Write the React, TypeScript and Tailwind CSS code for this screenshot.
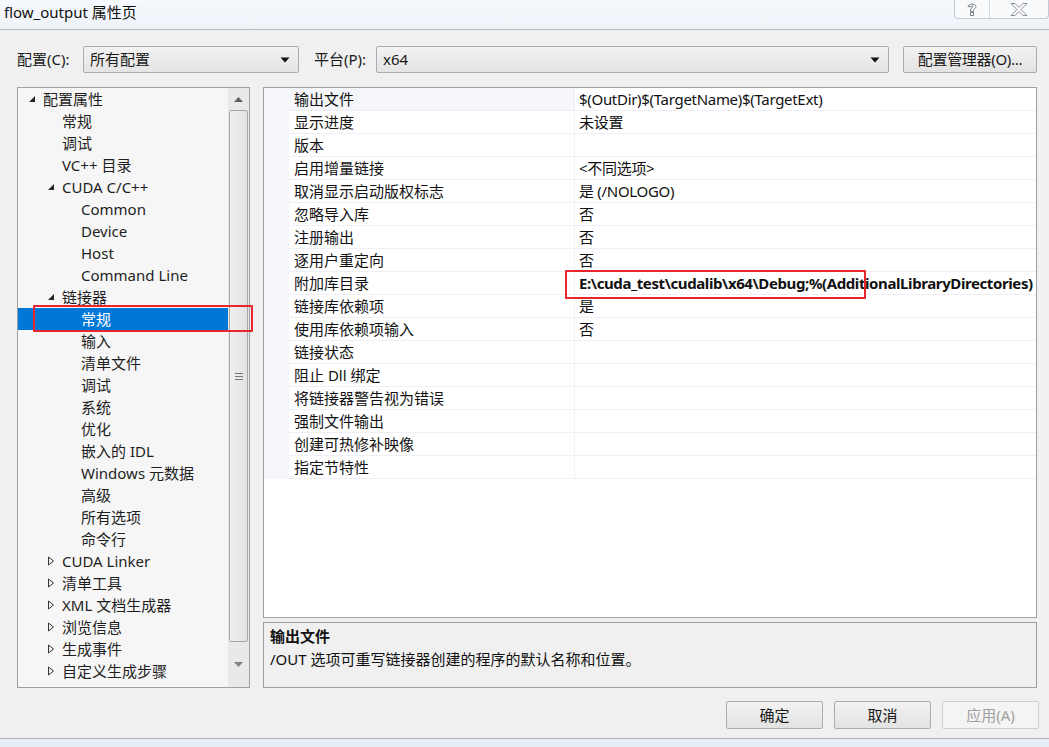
import React from "react";

const FONT = {
  fontFamily: '"Segoe UI", "Noto Sans", "Noto Sans CJK SC", sans-serif',
};

type TreeRow = {
  label: string;
  level: 0 | 1 | 2;
  arrow?: "open" | "closed";
  selected?: boolean;
};

const TREE: TreeRow[] = [
  { label: "配置属性", level: 0, arrow: "open" },
  { label: "常规", level: 1 },
  { label: "调试", level: 1 },
  { label: "VC++ 目录", level: 1 },
  { label: "CUDA C/C++", level: 1, arrow: "open" },
  { label: "Common", level: 2 },
  { label: "Device", level: 2 },
  { label: "Host", level: 2 },
  { label: "Command Line", level: 2 },
  { label: "链接器", level: 1, arrow: "open" },
  { label: "常规", level: 2, selected: true },
  { label: "输入", level: 2 },
  { label: "清单文件", level: 2 },
  { label: "调试", level: 2 },
  { label: "系统", level: 2 },
  { label: "优化", level: 2 },
  { label: "嵌入的 IDL", level: 2 },
  { label: "Windows 元数据", level: 2 },
  { label: "高级", level: 2 },
  { label: "所有选项", level: 2 },
  { label: "命令行", level: 2 },
  { label: "CUDA Linker", level: 1, arrow: "closed" },
  { label: "清单工具", level: 1, arrow: "closed" },
  { label: "XML 文档生成器", level: 1, arrow: "closed" },
  { label: "浏览信息", level: 1, arrow: "closed" },
  { label: "生成事件", level: 1, arrow: "closed" },
  { label: "自定义生成步骤", level: 1, arrow: "closed" },
];

const INDENT = ["pl-[10px]", "pl-[29px]", "pl-[48px]"];

const PROPS: { name: string; value: string; bold?: boolean }[] = [
  { name: "输出文件", value: "$(OutDir)$(TargetName)$(TargetExt)" },
  { name: "显示进度", value: "未设置" },
  { name: "版本", value: "" },
  { name: "启用增量链接", value: "<不同选项>" },
  { name: "取消显示启动版权标志", value: "是 (/NOLOGO)" },
  { name: "忽略导入库", value: "否" },
  { name: "注册输出", value: "否" },
  { name: "逐用户重定向", value: "否" },
  {
    name: "附加库目录",
    value: "E:\\cuda_test\\cudalib\\x64\\Debug;%(AdditionalLibraryDirectories)",
    bold: true,
  },
  { name: "链接库依赖项", value: "是" },
  { name: "使用库依赖项输入", value: "否" },
  { name: "链接状态", value: "" },
  { name: "阻止 Dll 绑定", value: "" },
  { name: "将链接器警告视为错误", value: "" },
  { name: "强制文件输出", value: "" },
  { name: "创建可热修补映像", value: "" },
  { name: "指定节特性", value: "" },
];

const Arrow = ({ kind }: { kind?: "open" | "closed" }) => {
  if (!kind) return null;
  if (kind === "open")
    return (
      <svg width="8" height="8" viewBox="0 0 8 8">
        <path d="M7 1 L7 7 L1 7 Z" fill="#262626" />
      </svg>
    );
  return (
    <svg width="8" height="10" viewBox="0 0 8 10">
      <path d="M1.5 1 L6.5 5 L1.5 9 Z" fill="none" stroke="#333" strokeWidth="1" />
    </svg>
  );
};

const DropDown = ({ text, w }: { text: string; w: string }) => (
  <div
    className={`${w} shrink-0 h-[27px] flex items-center justify-between px-[6px] border border-[#acacac] rounded-[2px] bg-gradient-to-b from-[#f2f2f2] to-[#e5e5e5] text-[15px] text-[#1a1a1a]`}
  >
    <span>{text}</span>
    <svg width="10" height="6" viewBox="0 0 10 6" className="mr-[2px]">
      <path d="M0.5 0.5 L9.5 0.5 L5 5.5 Z" fill="#111" />
    </svg>
  </div>
);

const Btn = ({ label, disabled }: { label: string; disabled?: boolean }) => (
  <div
    className={`w-[97px] h-[28px] flex items-center justify-center text-[15px] rounded-[2px] border ${
      disabled
        ? "border-[#d0d0d0] bg-[#f4f4f4] text-[#a0a0a0]"
        : "border-[#acacac] bg-gradient-to-b from-[#f2f2f2] to-[#e3e3e3] text-[#1a1a1a]"
    }`}
  >
    {label}
  </div>
);

const App = () => {
  return (
    <div style={FONT} className="relative w-[1049px] h-[747px] flex flex-col bg-[#e8eef6] overflow-hidden">
      {/* title bar */}
      <div className="h-[29px] flex items-start justify-between bg-gradient-to-b from-[#f6f9fd] to-[#eef3f9]">
        <div className="pl-[4px] pt-[1px] text-[15px] text-[#111] leading-[22px]">flow_output 属性页</div>
        <div className="flex h-[19px] border border-t-0 border-[#c5ccd6] rounded-b-[4px] bg-[#f8fafc]">
          <div className="w-[35px] flex items-center justify-center border-r border-[#d6dbe2]">
            <svg width="12" height="14" viewBox="0 0 12 14">
              <path
                d="M2 4.5 C2 1.5 10 1.5 10 4.5 C10 6.5 7.5 6.8 7.5 8.5 L7.5 9.5 L4.5 9.5 L4.5 8 C4.5 5.8 7 5.6 7 4.6 C7 3.6 5 3.6 5 4.8 Z M4.5 10.5 L7.5 10.5 L7.5 13.5 L4.5 13.5 Z"
                fill="#fff"
                stroke="#6b7280"
                strokeWidth="0.9"
              />
            </svg>
          </div>
          <div className="w-[58px] flex items-center justify-center">
            <svg width="18" height="13" viewBox="0 0 18 13">
              <path
                d="M1 0.5 L5 0.5 L9 4.5 L13 0.5 L17 0.5 L11 6.5 L17 12.5 L13 12.5 L9 8.5 L5 12.5 L1 12.5 L7 6.5 Z"
                fill="#fff"
                stroke="#7a808a"
                strokeWidth="0.9"
              />
            </svg>
          </div>
        </div>
      </div>

      {/* body */}
      <div className="h-[710px] bg-[#f0f0f0] border-t border-[#b9bec6] border-b border-b-[#b0b4ba] flex flex-col pl-[17px] pr-[12px] pt-[16px]">
        {/* config row */}
        <div className="flex items-center h-[27px] text-[15px] text-[#1a1a1a]">
          <span className="w-[66px] shrink-0">配置(C):</span>
          <DropDown text="所有配置" w="w-[216px]" />
          <span className="ml-[15px] w-[62px] shrink-0">平台(P):</span>
          <DropDown text="x64" w="w-[513px]" />
          <div className="ml-[14px] w-[134px] shrink-0 h-[27px] flex items-center justify-center border border-[#acacac] rounded-[2px] bg-gradient-to-b from-[#f2f2f2] to-[#e3e3e3] tracking-[-0.3px]">
            配置管理器(O)...
          </div>
        </div>

        {/* main */}
        <div className="mt-[14px] h-[601px] flex">
          {/* tree */}
          <div className="w-[233px] shrink-0 h-full border border-[#a0a0a0] bg-[#f6f6f6] flex">
            <div className="flex-1 flex flex-col">
              {TREE.map((r, i) => (
                <div
                  key={i}
                  className={`h-[22px] flex items-center ${INDENT[r.level]} text-[15px] ${
                    r.selected ? "bg-[#0078d7] text-white" : "text-[#1e1e1e]"
                  }`}
                >
                  <span className="w-[15px] flex items-center">
                    <Arrow kind={r.arrow} />
                  </span>
                  <span className="whitespace-nowrap">{r.label}</span>
                </div>
              ))}
            </div>
            {/* scrollbar */}
            <div className="w-[21px] shrink-0 h-full bg-[#e9e9e9] flex flex-col">
              <div className="h-[22px] flex items-center justify-center">
                <svg width="9" height="5" viewBox="0 0 9 5">
                  <path d="M0 5 L4.5 0 L9 5 Z" fill="#606060" />
                </svg>
              </div>
              <div className="mx-[1px] h-[532px] border border-[#a8a8a8] rounded-[2px] bg-gradient-to-r from-[#f0f0f0] to-[#e2e2e2] flex items-center justify-center">
                <div className="flex flex-col gap-[2px]">
                  <div className="w-[8px] h-[1px] bg-[#777]" />
                  <div className="w-[8px] h-[1px] bg-[#777]" />
                  <div className="w-[8px] h-[1px] bg-[#777]" />
                </div>
              </div>
              <div className="flex-1 flex items-center justify-center">
                <svg width="9" height="5" viewBox="0 0 9 5">
                  <path d="M0 0 L4.5 5 L9 0 Z" fill="#808080" />
                </svg>
              </div>
            </div>
          </div>

          {/* right side */}
          <div className="ml-[13px] w-[774px] shrink-0 flex flex-col">
            <div className="h-[531px] border border-[#a0a0a0] bg-white flex flex-col overflow-hidden">
              {PROPS.map((p, i) => (
                <div key={i} className="h-[23px] flex text-[15px] text-[#111]">
                  <div className="w-[25px] shrink-0 bg-[#f4f6fa]" />
                  <div
                    className={`w-[286px] shrink-0 flex items-center pl-[5px] border-b border-r border-[#eef0f5] ${
                      i === 0 ? "bg-[#f4f6fa]" : ""
                    }`}
                  >
                    {p.name}
                  </div>
                  <div
                    className={`flex-1 min-w-0 flex items-center pl-[4px] border-b border-[#eef0f5] whitespace-nowrap overflow-hidden ${
                      p.bold ? "font-bold tracking-[-0.4px]" : "tracking-[-0.3px]"
                    }`}
                  >
                    {p.value}
                  </div>
                </div>
              ))}
            </div>
            <div className="mt-[4px] flex-1 border border-[#a0a0a0] bg-[#f0f0f0] px-[6px] pt-[2px] text-[15px] text-[#111]">
              <div className="h-[23px] flex items-center font-bold">输出文件</div>
              <div className="h-[23px] flex items-center">/OUT 选项可重写链接器创建的程序的默认名称和位置。</div>
            </div>
          </div>
        </div>

        {/* buttons */}
        <div className="mt-[13px] flex justify-end gap-[11px] mr-[-2px]">
          <Btn label="确定" />
          <Btn label="取消" />
          <Btn label="应用(A)" disabled />
        </div>
      </div>

      {/* red highlight boxes */}
      <div className="absolute left-[33px] top-[305px] w-[220px] h-[27px] border-2 border-[#e8262d] rounded-[1px]" />
      <div className="absolute left-[565px] top-[270px] w-[301px] h-[29px] border-2 border-[#e8262d] rounded-[1px]" />
    </div>
  );
};

export default App;
